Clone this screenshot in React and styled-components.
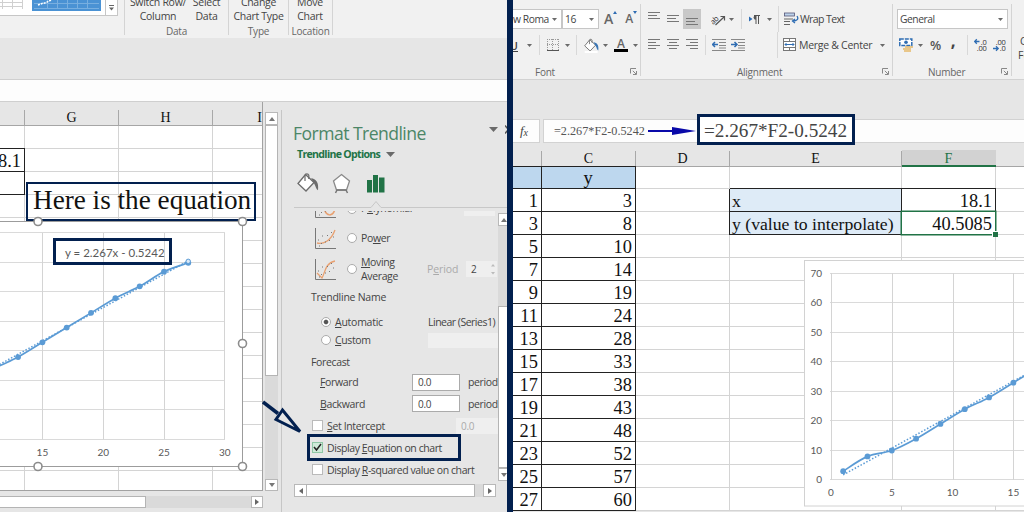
import React from "react";
import styled, { createGlobalStyle, css } from "styled-components";

const NAVY = "#02204f";
const GREEN = "#217346";
const BLUE = "#5b9bd5";

const points = [
  [1, 3],
  [3, 8],
  [5, 10],
  [7, 14],
  [9, 19],
  [11, 24],
  [13, 28],
  [15, 33],
  [17, 38],
  [19, 43],
  [21, 48],
  [23, 52],
  [25, 57],
  [27, 60],
];

const trend = (x) => 2.267 * x - 0.5242;

/* Catmull-Rom smoothing, like the smoothed scatter lines */
function smoothPath(pts) {
  let d = `M${pts[0][0]} ${pts[0][1]}`;
  for (let i = 0; i < pts.length - 1; i++) {
    const p0 = pts[i - 1] || pts[i];
    const p1 = pts[i];
    const p2 = pts[i + 1];
    const p3 = pts[i + 2] || p2;
    d += ` C${p1[0] + (p2[0] - p0[0]) / 6} ${p1[1] + (p2[1] - p0[1]) / 6} ${
      p2[0] - (p3[0] - p1[0]) / 6
    } ${p2[1] - (p3[1] - p1[1]) / 6} ${p2[0]} ${p2[1]}`;
  }
  return d;
}

function Series({ sx, sy }) {
  const pts = points.map(([x, y]) => [sx(x), sy(y)]);
  return (
    <g>
      <path
        d={`M${sx(1)} ${sy(trend(1))} L${sx(27)} ${sy(trend(27))}`}
        stroke={BLUE}
        strokeWidth="1.5"
        strokeDasharray="1.5 1.8"
        fill="none"
      />
      <path d={smoothPath(pts)} stroke={BLUE} strokeWidth="1.7" fill="none" />
      {pts.map(([x, y]) => (
        <circle key={x} cx={x} cy={y} r="2.9" fill={BLUE} />
      ))}
    </g>
  );
}

function LeftChart() {
  const sx = (x) => 42.4 + (x - 15) * 12.16;
  const sy = (y) => 218.5 - y * 2.945;
  return (
    <LeftChartSvg width="250" height="254" viewBox="0 0 250 254">
      <rect x="-20" y="0.5" width="262.5" height="245" fill="#fff" stroke="#9c9c9c" />
      {[0, 10, 20, 30, 40, 50, 60, 70].map((v) => (
        <path key={v} d={`M0 ${Math.round(sy(v)) - 0.5} H225`} stroke="#dadada" />
      ))}
      {[15, 20, 25, 30].map((v) => (
        <g key={v}>
          <path d={`M${Math.floor(sx(v)) + 0.5} 12 V218.5`} stroke="#d4d4d4" />
          <ChartText x={sx(v)} y="235" textAnchor="middle">
            {v}
          </ChartText>
        </g>
      ))}
      <Series sx={sx} sy={sy} />
      <circle cx="188.2" cy="40.3" r="2.2" fill="#dbe9f6" stroke={BLUE} />
      {[
        [38, 0.5],
        [242.5, 0.5],
        [242.5, 122.5],
        [38, 245.5],
        [242.5, 245.5],
      ].map(([x, y]) => (
        <circle key={`${x}-${y}`} cx={x} cy={y} r="4" fill="#fff" stroke="#8c8c8c" strokeWidth="1.6" />
      ))}
    </LeftChartSvg>
  );
}

function RightChart() {
  const sx = (x) => 27 + x * 12.16;
  const sy = (y) => 220 - y * 2.95;
  return (
    <RightChartSvg width="220" height="247" viewBox="0 0 220 247">
      <rect x="0.5" y="0.5" width="240" height="245.5" fill="#fff" stroke="#d2d2d2" />
      {[0, 10, 20, 30, 40, 50, 60, 70].map((v) => (
        <g key={v}>
          <path d={`M26 ${Math.round(sy(v)) - 0.5} H220`} stroke="#dadada" />
          <ChartText x="18" y={sy(v) + 3} textAnchor="end">
            {v}
          </ChartText>
        </g>
      ))}
      {[0, 5, 10, 15].map((v) => (
        <g key={v}>
          <path d={`M${Math.round(sx(v)) + 0.5} 13 V220`} stroke="#d4d4d4" />
          <ChartText x={sx(v)} y="236" textAnchor="middle">
            {v}
          </ChartText>
        </g>
      ))}
      <Series sx={sx} sy={sy} />
    </RightChartSvg>
  );
}

function Caret({ $ml, w = 5, h = 3 }) {
  return (
    <Icon $ml={$ml} width={w} height={h} viewBox="0 0 6 4" preserveAspectRatio="none">
      <path d="M0 0h6L3 4z" fill="#6a6a6a" />
    </Icon>
  );
}

function Lines({ widths, align = "start", $ml, gap = 3 }) {
  const h = widths.length * gap;
  return (
    <Icon $ml={$ml} width="12" height={h} viewBox={`0 0 12 ${h}`}>
      {widths.map((w, i) => {
        const x = align === "start" ? 0 : align === "end" ? 12 - w : (12 - w) / 2;
        return <path key={i} d={`M${x} ${i * gap + 0.5} h${w}`} stroke="#777" />;
      })}
    </Icon>
  );
}

function Launcher() {
  return (
    <LauncherIcon width="8" height="8" viewBox="0 0 8 8" fill="none" stroke="#888">
      <path d="M0.5 5.5V0.5H6M2.8 2.8L6 6M6.5 3v3.5H3" />
    </LauncherIcon>
  );
}

function Bucket({ $ml, size = 16, bar }) {
  return (
    <Icon $ml={$ml} width={size} height={size} viewBox="0 0 22 22">
      <path d="M8.5 2.5L17 10.5 9 19 1 11.5z" fill="#fff" stroke="#6c6c6c" strokeWidth="1.3" />
      <path d="M8 9V3.2a2 2 0 0 1 3.8 0V7" fill="none" stroke="#6c6c6c" strokeWidth="1.2" />
      <path d="M14 6.3c5 .6 8 4 7 12-2-1-2.200-4-4-7z" fill={bar ? "#3b76b5" : "#6c6c6c"} />
      {bar && <path d="M1 20.500h19" stroke="#fff" strokeWidth="3" />}
    </Icon>
  );
}

function Indent({ $ml, flip }) {
  return (
    <Icon $ml={$ml} width="14" height="12" viewBox="0 0 14 12">
      <path d="M0 .5h14M7 3.500h7M7 6.500h7M7 9h7M0 11.500h14" stroke="#888" />
      <path
        d={flip ? "M0 5.500h6M3.500 3l2.500 2.500-2.500 2.500" : "M6 5.500H0.500M3 3L0.500 5.500 3 8"}
        stroke="#2f6db3"
        strokeWidth="1.5"
        fill="none"
      />
    </Icon>
  );
}

function Decimals({ $ml, top, bottom, increase }) {
  return (
    <Icon $ml={$ml} width="13" height="14" viewBox="0 0 13 14">
      <DigitText x="12.5" y="6.5" textAnchor="end">
        {top}
      </DigitText>
      <DigitText x="12.5" y="13" textAnchor="end">
        {bottom}
      </DigitText>
      <path
        d={increase ? "M5.500 3.500H.8M2.800 1.300L.6 3.500l2.200 2.200" : "M0 10.500h5M3 8.300l2.200 2.200L3 12.700"}
        stroke="#2f6db3"
        strokeWidth="1.300"
        fill="none"
      />
    </Icon>
  );
}

function TrendIcon({ kind }) {
  return (
    <svg width="23" height="21" viewBox="0 0 23 21" fill="none">
      <path d="M1.500 0V20.500H22" stroke="#777" />
      {kind === "power" && <path d="M3 15C9 16.500 17 13 21 2" stroke="#e8a070" strokeWidth="1.300" />}
      {kind === "moving" && <path d="M3 14l5 5C11 14 11 4 21 2" stroke="#e8a070" strokeWidth="1.300" />}
      {kind === "poly" && <path d="M10 11c2 9 9 9 11 1" stroke="#e8a070" strokeWidth="1.500" />}
      <path
        d="M4 12h1M7 15.500h1M8 8h1M11 14h1M13 7.500h1M15 12.500h1M17 4.500h1M19 9h1M5 18h1"
        stroke="#777"
      />
    </svg>
  );
}

function LeftPane() {
  return (
    <Left>
      <LeftRibbon>
        <Gallery>
          <svg width="118" height="16" viewBox="0 0 118 16">
            <rect x="-1" y="-1" width="118.500" height="16.500" fill="#fff" stroke="#c6c6c6" />
            <path d="M0 2.500h23M0 6.500h23M2.500 0v9M12.500 0v9M22.500 0v9" stroke="#d0d0d0" />
            <rect x="32" y="-1" width="69" height="12" fill="#4a92d4" />
            <path d="M34 3.500h65M34 8.500h65M47.500 0v9M57.500 0v9M67.500 0v9M77.500 0v9M87.500 0v9" stroke="#78afe0" />
            <path d="M38 5l4-1.500 4-.8 5-2.700" stroke="#fff" fill="none" strokeDasharray="2 1" strokeWidth="1.500" />
            <path d="M105.500 0v15" stroke="#c6c6c6" />
            <path d="M109 5.500h5" stroke="#666" />
            <path d="M109 7.500h5l-2.500 3z" fill="#666" />
          </svg>
        </Gallery>
        <RibbonGroup $w={104}>
          <BigButtons>
            <BigButton $w={66}>
              <span>Switch Row/</span>
              <span>Column</span>
            </BigButton>
            <BigButton $w={31}>
              <span>Select</span>
              <span>Data</span>
            </BigButton>
          </BigButtons>
          <GroupName>Data</GroupName>
        </RibbonGroup>
        <RibbonGroup $w={60}>
          <BigButtons>
            <BigButton $w={59}>
              <span>Change</span>
              <span>Chart Type</span>
            </BigButton>
          </BigButtons>
          <GroupName>Type</GroupName>
        </RibbonGroup>
        <RibbonGroup $w={44}>
          <BigButtons>
            <BigButton $w={42}>
              <span>Move</span>
              <span>Chart</span>
            </BigButton>
          </BigButtons>
          <GroupName>Location</GroupName>
        </RibbonGroup>
      </LeftRibbon>
      <FormulaStrip />
      <LeftBody>
        <SheetColumn>
          <LeftGrid>
            <HeadCell />
            <HeadCell>G</HeadCell>
            <HeadCell>H</HeadCell>
            <HeadCell $last>I</HeadCell>
            {Array.from({ length: 16 }, (_, r) => (
              <React.Fragment key={r}>
                <Cell $boxed={r === 1 || r === 2}>{r === 1 ? "8.1" : ""}</Cell>
                <Cell />
                <Cell />
                <Cell $last />
              </React.Fragment>
            ))}
          </LeftGrid>
          <HScroll>
            <HThumb />
            <ScrollButton $w={12} $h={12}>
              <svg width="4" height="6" viewBox="0 0 4 6">
                <path d="M0 0l4 3-4 3z" fill="#666" />
              </svg>
            </ScrollButton>
          </HScroll>
        </SheetColumn>
        <VScroll>
          <ScrollButton $w={13} $h={13}>
            <svg width="6" height="4" viewBox="0 0 6 4">
              <path d="M0 4l3-4 3 4z" fill="#777" />
            </svg>
          </ScrollButton>
          <VThumb />
          <VTrack />
          <ScrollButton $w={13} $h={12}>
            <svg width="6" height="4" viewBox="0 0 6 4">
              <path d="M0 0l3 4 3-4z" fill="#777" />
            </svg>
          </ScrollButton>
        </VScroll>
        <TrendlinePane />
      </LeftBody>
      <Note>Here is the equation</Note>
      <LeftChart />
      <EquationBox>y = 2.267x - 0.5242</EquationBox>
      <CheckHighlight />
      <Pointer width="46" height="40" viewBox="0 0 46 40" fill="none" stroke={NAVY} strokeWidth="3">
        <path d="M1 2L16 13.500" strokeWidth="3.500" />
        <path d="M20.500 10L14 19.500 38 31.500z" fill="#e6e6e6" />
      </Pointer>
    </Left>
  );
}

function TrendlinePane() {
  return (
    <Pane>
      <PaneHeader>
        <PaneTitle>Format Trendline</PaneTitle>
        <Caret w={9} h={5} />
        <Icon $ml={7} width="8" height="9" viewBox="0 0 8 8">
          <path d="M0 0l7 8M7 0L0 8" stroke="#555" strokeWidth="1.500" />
        </Icon>
      </PaneHeader>
      <OptionsRow>
        Trendline Options
        <Caret $ml={6} w={9} h={5} />
      </OptionsRow>
      <PaneTabs>
        <Bucket size={22} />
        <Icon $ml={12} width="21" height="21" viewBox="0 0 20 21">
          <path d="M10 1.500L18 8l-3 9H5L2 8z" fill="#fff" stroke="#8a8a8a" strokeWidth="1.300" />
          <path d="M4 20l1.500-3h9l1.500 3" fill="none" stroke="#777" strokeWidth="1.500" />
        </Icon>
        <Icon $ml={15} width="18" height="19" viewBox="0 0 18 19">
          <path d="M0 6h5v12.500H0zM6 1h5v17.500H6zM12 3.500h5.500v15H12z" fill={GREEN} />
        </Icon>
      </PaneTabs>
      <svg width="226" height="10" viewBox="0 0 226 10">
        <path d="M12 8.500H89L94 2.500l5 6H226" fill="none" stroke="#c8c8c8" />
      </svg>
      <PaneBody>
        <Options>
          <ClippedRow>
            <TrendIcon kind="poly" />
            <Radio $ml={10} $drop={4} />
            <ClippedLabel>
              P<u>o</u>lynomial
            </ClippedLabel>
            <Field $w={31} $h={16} $ml={48} $flat $drop={2} />
          </ClippedRow>
          <OptionRow $h={38} $pl={32}>
            <TrendIcon kind="power" />
            <Radio $ml={10} />
            <Label $w={75}>
              Po<u>w</u>er
            </Label>
          </OptionRow>
          <OptionRow $h={24} $pl={32}>
            <TrendIcon kind="moving" />
            <Radio $ml={10} />
            <Label $w={66}>
              <u>M</u>oving
              <br />
              Average
            </Label>
            <Label $w={39} $faded $ls={-0.1}>
              P<u>e</u>riod
            </Label>
            <Field $w={31} $h={16} $flat>
              2
              <svg width="6" height="12" viewBox="0 0 6 12">
                <path d="M1 3.500L3 1l2 2.500zM1 9l2 2.500L5 9z" fill="#bbb" />
              </svg>
            </Field>
          </OptionRow>
          <OptionRow $h={32} $pl={29}>
            <Label $ls={-0.25}>Trendline Name</Label>
          </OptionRow>
          <OptionRow $h={17} $pl={39}>
            <Radio $on />
            <Label $w={93} $ls={-0.25}>
              <u>A</u>utomatic
            </Label>
            <Label $ls={-0.5}>Linear (Series1)</Label>
          </OptionRow>
          <OptionRow $h={20} $pl={39}>
            <Radio />
            <Label $w={93}>
              <u>C</u>ustom
            </Label>
            <Field $w={71} $h={15} $flat />
          </OptionRow>
          <OptionRow $h={24} $pl={29}>
            <Label>Forecast</Label>
          </OptionRow>
          <OptionRow $h={16} $pl={38}>
            <Label $w={92}>
              <u>F</u>orward
            </Label>
            <Field $w={48} $h={17}>0.0</Field>
            <Label $ml={8}>period</Label>
          </OptionRow>
          <OptionRow $h={27} $pl={38}>
            <Label $w={92}>
              <u>B</u>ackward
            </Label>
            <Field $w={48} $h={17}>0.0</Field>
            <Label $ml={8}>period</Label>
          </OptionRow>
          <OptionRow $h={17} $pl={30}>
            <Checkbox />
            <Label $w={129}>
              <u>S</u>et Intercept
            </Label>
            <Field $w={42} $h={16} $flat>
              <Faded>0.0</Faded>
            </Field>
          </OptionRow>
          <OptionRow $h={27} $pl={30}>
            <Checkbox $on>
              <svg width="9" height="9" viewBox="0 0 9 9">
                <path d="M1 4l2.500 3L8 1" stroke="#222" strokeWidth="1.500" fill="none" />
              </svg>
            </Checkbox>
            <Label $ls={-0.42}>
              Display <u>E</u>quation on chart
            </Label>
          </OptionRow>
          <OptionRow $h={17} $pl={30}>
            <Checkbox />
            <Label $ls={-0.42}>
              Display <u>R</u>-squared value on chart
            </Label>
          </OptionRow>
        </Options>
        <PaneScroll>
          <ScrollButton $w={12} $h={13}>
            <svg width="6" height="4" viewBox="0 0 6 4">
              <path d="M0 4l3-4 3 4z" fill="#777" />
            </svg>
          </ScrollButton>
          <PaneTrack />
          <PaneThumb />
          <ScrollButton $w={12} $h={13}>
            <svg width="6" height="4" viewBox="0 0 6 4">
              <path d="M0 0l3 4 3-4z" fill="#777" />
            </svg>
          </ScrollButton>
        </PaneScroll>
      </PaneBody>
      <PaneHScroll>
        <ScrollButton $w={13} $h={13}>
          <svg width="4" height="6" viewBox="0 0 4 6">
            <path d="M4 0L0 3l4 3z" fill="#666" />
          </svg>
        </ScrollButton>
        <PaneHThumb />
        <ScrollButton $w={13} $h={13}>
          <svg width="4" height="6" viewBox="0 0 4 6">
            <path d="M0 0l4 3-4 3z" fill="#666" />
          </svg>
        </ScrollButton>
      </PaneHScroll>
    </Pane>
  );
}

function RightRibbon() {
  return (
    <Ribbon>
      <ToolGroup $w={128}>
        <ToolRow>
          <ComboBox $w={49}>
            w Roma
            <Caret />
          </ComboBox>
          <ComboBox $w={37} $left>
            16
            <Caret />
          </ComboBox>
          <GrowLetter $ml={5} $size={14}>
            A
            <svg width="4" height="3" viewBox="0 0 4 3">
              <path d="M2 0l2 3H0z" fill="#2f6db3" />
            </svg>
          </GrowLetter>
          <GrowLetter $ml={8} $size={12}>
            A
            <svg width="4" height="3" viewBox="0 0 4 3">
              <path d="M0 0h4L2 3z" fill="#2f6db3" />
            </svg>
          </GrowLetter>
        </ToolRow>
        <ToolRow>
          <Underline>U</Underline>
          <Caret $ml={9} />
          <ToolDivider $ml={7} />
          <Icon $ml={7} width="12" height="12" viewBox="0 0 12 12">
            <path d="M.5 0v11M5.500 0v11M11.500 0v11M0 .5h12M0 5.500h12" stroke="#999" strokeDasharray="1 1" />
            <path d="M0 11.500h12" stroke="#555" />
          </Icon>
          <Caret $ml={6} />
          <ToolDivider $ml={6} />
          <Bucket $ml={7} size={15} bar />
          <Caret $ml={4} />
          <FontColor $ml={6}>A</FontColor>
          <Caret $ml={5} />
        </ToolRow>
        <ToolName $pl={22}>Font</ToolName>
        <Launcher />
      </ToolGroup>
      <ToolGroup $w={252}>
        <ToolRow>
          <Raised $up={3}>
            <Lines $ml={7} widths={[12, 9, 12]} />
          </Raised>
          <Lines $ml={7} widths={[12, 9, 12]} />
          <Selected>
            <Lines widths={[12, 9, 12]} />
          </Selected>
          <Icon $ml={10} width="15" height="14" viewBox="0 0 15 14">
            <DigitText x="-2" y="9" transform="rotate(-45 5 6)">
              ab
            </DigitText>
            <path d="M4.500 13L13 5M9.500 4.500h4V8.500" stroke="#555" fill="none" strokeWidth="1.200" />
          </Icon>
          <Caret $ml={3} />
          <ToolDivider $ml={7} />
          <Icon $ml={7} width="11" height="9" viewBox="0 0 11 9">
            <path d="M0 1.500v5L3.500 4z" fill="#2f6db3" />
            <path d="M7 9V.5M9.500 9V.5M5 .5h6" stroke="#555" />
            <path d="M7 0a2.300 2.300 0 0 0 0 4.800z" fill="#555" />
          </Icon>
          <Caret $ml={7} />
          <ToolDivider $ml={6} $tall />
          <Icon $ml={5} width="15" height="14" viewBox="0 0 15 14">
            <rect x=".5" y="1" width="10" height="3" fill="#bcd3ec" stroke="#557" strokeWidth=".8" />
            <path d="M0 7h9M0 9.500h6M0 12.500h6" stroke="#666" />
            <path d="M13 4c2 3 0 5-4 5M11 7L8.500 9 11 11" stroke="#2f6db3" strokeWidth="1.300" fill="none" />
          </Icon>
          <ToolText $ls={-0.6}>Wrap Text</ToolText>
        </ToolRow>
        <ToolRow>
          <Lines $ml={7} widths={[12, 8, 12, 8]} />
          <Lines $ml={7} align="mid" widths={[12, 8, 12, 8]} />
          <Lines $ml={7} align="end" widths={[12, 8, 12, 8]} />
          <ToolDivider $ml={7} />
          <Indent $ml={6} />
          <Indent $ml={5} flip />
          <ToolDivider $ml={32} $tall />
          <Icon $ml={5} width="13" height="14" viewBox="0 0 13 14">
            <rect x=".5" y=".5" width="12" height="12" fill="#fff" stroke="#777" />
            <path d="M.5 3.500h12M.5 9.500h12M6.500 .5v3M6.500 9.500v3" stroke="#777" />
            <path d="M2 6.500h9M3.500 5L2 6.500 3.500 8M9.500 5L11 6.500 9.500 8" stroke="#2f6db3" fill="none" />
          </Icon>
          <ToolText $ml={3} $ls={-0.28}>
            Merge &amp; Center
          </ToolText>
          <Caret $ml={8} />
        </ToolRow>
        <ToolName $pl={96}>Alignment</ToolName>
        <Launcher />
      </ToolGroup>
      <ToolGroup $w={119}>
        <ToolRow>
          <ComboBox $w={111} $ml={4} $left>
            General
            <Caret />
          </ComboBox>
        </ToolRow>
        <ToolRow>
          <Icon $ml={6} width="14" height="14" viewBox="0 0 14 14">
            <rect x=".8" y="1" width="12" height="6.500" fill="#fff" stroke="#2f6db3" strokeWidth="1.500" strokeDasharray="4 1" />
            <circle cx="7" cy="4.300" r="1.800" fill="#2f6db3" />
            <path d="M6 9h8M4 11h8M5 13h7" stroke="#e6b968" strokeWidth="1.700" />
          </Icon>
          <Caret $ml={5} />
          <Percent>%</Percent>
          <Comma>,</Comma>
          <ToolDivider $ml={11} />
          <Decimals $ml={6} top=".0" bottom=".00" increase />
          <Decimals $ml={6} top=".00" bottom=".0" />
        </ToolRow>
        <ToolName $pl={35}>Number</ToolName>
        <Launcher />
      </ToolGroup>
      <CutOff>
        <span>C</span>
        <span>Fo</span>
      </CutOff>
    </Ribbon>
  );
}

function RightPane() {
  return (
    <Right>
      <RightRibbon />
      <FormulaRow>
        <FxBox>
          f<small>x</small>
        </FxBox>
        <FormulaInput>
          =2.267*F2-0.5242
          <svg width="49" height="10" viewBox="0 0 49 10">
            <path d="M0 4h26v2H0zM24 1l24 4-24 4z" fill="#0808a8" />
          </svg>
        </FormulaInput>
      </FormulaRow>
      <RightGrid>
        <HeadCell />
        <HeadCell>C</HeadCell>
        <HeadCell>D</HeadCell>
        <HeadCell>E</HeadCell>
        <HeadCell $active>F</HeadCell>
        <HeadCell $last />
        <Cell $boxed $fill="#bdd7ee" />
        <Cell $boxed $fill="#bdd7ee" $center>
          y
        </Cell>
        <Cell />
        <Cell />
        <Cell />
        <Cell $last />
        {points.map(([x, y], r) => (
          <React.Fragment key={x}>
            <Cell $boxed>{x}</Cell>
            <Cell $boxed>{y}</Cell>
            <Cell />
            {r < 2 ? (
              <Cell $boxed $fill="#deebf7" $text>
                {r === 0 ? "x" : "y (value to interpolate)"}
              </Cell>
            ) : (
              <Cell />
            )}
            <Cell $boxed={r < 2} $selected={r === 1}>
              {r === 0 ? "18.1" : r === 1 ? "40.5085" : ""}
            </Cell>
            <Cell $last />
          </React.Fragment>
        ))}
      </RightGrid>
      <RightChart />
      <FormulaZoom>=2.267*F2-0.5242</FormulaZoom>
    </Right>
  );
}

function App() {
  return (
    <Page>
      <GlobalStyle />
      <LeftPane />
      <Divider />
      <RightPane />
    </Page>
  );
}

const GlobalStyle = createGlobalStyle`
  * {
    box-sizing: border-box;
  }
  body {
    margin: 0;
    overflow: hidden;
    font-family: "Open Sans", "Noto Sans", sans-serif;
    font-size: 10.5px;
    color: #444;
  }
  svg {
    display: block;
    flex-shrink: 0;
  }
`;

const Page = styled.div`
  display: flex;
  width: 1024px;
  height: 512px;
  overflow: hidden;
  background: #e6e6e6;
`;

const Divider = styled.div`
  width: 6px;
  background: ${NAVY};
  flex-shrink: 0;
`;

const Left = styled.section`
  position: relative;
  display: flex;
  flex-direction: column;
  width: 507px;
  overflow: hidden;
  flex-shrink: 0;
`;

const Right = styled.section`
  position: relative;
  display: flex;
  flex-direction: column;
  width: 511px;
  overflow: hidden;
`;

/* shared bits */

const Icon = styled.svg`
  margin-left: ${({ $ml }) => $ml || 0}px;
`;

const ChartText = styled.text`
  font-family: Lato, sans-serif;
  font-size: 10px;
  fill: #595959;
`;

const DigitText = styled.text`
  font-size: 7.5px;
  letter-spacing: -0.3px;
  fill: #333;
`;

const serif = css`
  font-family: "Liberation Serif", "Times New Roman", serif;
  color: #111;
`;

const ScrollButton = styled.div`
  display: flex;
  align-items: center;
  justify-content: center;
  width: ${({ $w }) => $w}px;
  height: ${({ $h }) => $h}px;
  background: #fff;
  border: 1px solid #b8b8b8;
  flex-shrink: 0;
`;

/* left ribbon */

const LeftRibbon = styled.div`
  display: flex;
  height: 38px;
  background: #f1f1f1;
`;

const Gallery = styled.div`
  width: 125px;
  height: 35px;
  border-right: 1px solid #d4d4d4;
`;

const RibbonGroup = styled.div`
  display: flex;
  flex-direction: column;
  align-items: center;
  width: ${({ $w }) => $w}px;
  height: 35px;
  border-right: 1px solid #d4d4d4;
`;

const BigButtons = styled.div`
  display: flex;
  width: 100%;
  height: 25px;
  margin-top: -4px;
`;

const BigButton = styled.div`
  display: flex;
  flex-direction: column;
  align-items: center;
  width: ${({ $w }) => $w}px;
  line-height: 13.5px;
  letter-spacing: -0.28px;
  white-space: nowrap;
`;

const GroupName = styled.div`
  margin-top: 3px;
  line-height: 14px;
  font-size: 10px;
  letter-spacing: -0.2px;
  color: #666;
`;

const FormulaStrip = styled.div`
  height: 23px;
  margin-top: 41px;
  background: #fdfdfd;
  border-top: 1px solid #cfcfcf;
  border-bottom: 1px solid #cfcfcf;
  flex-shrink: 0;
`;

/* sheets */

const LeftBody = styled.div`
  display: flex;
  height: 410px;
`;

const SheetColumn = styled.div`
  display: flex;
  flex-direction: column;
  width: 263px;
`;

const LeftGrid = styled.div`
  display: grid;
  grid-template-columns: 25px 94px 94px 50px;
  grid-template-rows: 24px;
  grid-auto-rows: 23px;
  height: 389px;
  overflow: hidden;
  border-right: 1px solid #a2a2a2;
  border-bottom: 1px solid #a2a2a2;
`;

const RightGrid = styled.div`
  display: grid;
  grid-template-columns: 29px 94px 94px 172px 94px 60px;
  grid-template-rows: 24px 22px;
  grid-auto-rows: 23px;
  height: 370px;
  overflow: hidden;
`;

const HeadCell = styled.div`
  ${serif}
  display: flex;
  align-items: flex-end;
  justify-content: ${({ $last }) => ($last ? "flex-end" : "center")};
  padding: 0 1px 0 0;
  font-size: 14px;
  line-height: 14px;
  background: linear-gradient(#a8a8a8, #a8a8a8) no-repeat right bottom / 1px 15px #e6e6e6;
  border-bottom: 1px solid #a6a6a6;
  ${({ $last }) =>
    $last &&
    css`
      background: #e6e6e6;
    `}
  ${({ $active }) =>
    $active &&
    css`
      color: ${GREEN};
      background: linear-gradient(#d2d2d2, #d2d2d2) no-repeat right bottom / 94px 15px #e6e6e6;
      border-bottom: 2px solid ${GREEN};
      line-height: 12px;
    `}
`;

const Cell = styled.div`
  ${serif}
  display: flex;
  align-items: center;
  justify-content: ${({ $center, $text }) => ($center ? "center" : $text ? "flex-start" : "flex-end")};
  padding: ${({ $center }) => ($center ? 0 : 2)}px 3px 0 2px;
  font-size: 18.4px;
  line-height: 20px;
  white-space: nowrap;
  background: ${({ $fill }) => $fill || "#fff"};
  border-right: ${({ $last }) => ($last ? 0 : 1)}px solid #d4d4d4;
  border-bottom: 1px solid #d4d4d4;
  ${({ $boxed }) =>
    $boxed &&
    css`
      border-color: #222;
      box-shadow: 0 -1px 0 #222, -1px 0 0 #222;
    `}
  ${({ $text }) =>
    $text &&
    css`
      font-size: 17.7px;
    `}
  ${({ $selected }) =>
    $selected &&
    css`
      position: relative;
      z-index: 1;
      margin: -1px 0 0 -1px;
      border: 1px solid ${GREEN};
      box-shadow: 0 0 0 0.5px ${GREEN};
      &::after {
        content: "";
        position: absolute;
        right: -3px;
        bottom: -3px;
        width: 5px;
        height: 5px;
        background: ${GREEN};
        border-top: 1px solid #fff;
        border-left: 1px solid #fff;
      }
    `}
`;

const HScroll = styled.div`
  display: flex;
  justify-content: space-between;
  height: 12px;
  margin-top: 5px;
  background: #dadada;
`;

const HThumb = styled.div`
  width: 146px;
  background: #fff;
  border: 1px solid #b4b4b4;
  border-left: 0;
`;

const VScroll = styled.div`
  display: flex;
  flex-direction: column;
  width: 13px;
  height: 379px;
  margin: 10px 3px 0 2px;
  flex-shrink: 0;
`;

const VThumb = styled.div`
  height: 251px;
  background: #fff;
  border: 1px solid #b4b4b4;
`;

const VTrack = styled.div`
  flex: 1;
  background: #dadada;
`;

/* trendline pane */

const Pane = styled.div`
  width: 226px;
  height: 402px;
  margin-top: 8px;
  border-left: 1px solid #c6c6c6;
  flex-shrink: 0;
`;

const PaneHeader = styled.div`
  display: flex;
  align-items: center;
  height: 30px;
  padding: 9px 0 0 11px;
`;

const PaneTitle = styled.div`
  width: 196px;
  margin-top: 6px;
  font-size: 17.6px;
  line-height: 24px;
  letter-spacing: -0.55px;
  white-space: nowrap;
  color: #4c8667;
  flex-shrink: 0;
`;

const OptionsRow = styled.div`
  display: flex;
  align-items: center;
  height: 28px;
  padding: 0 0 0 15px;
  font-weight: 700;
  font-size: 10.6px;
  letter-spacing: -0.7px;
  color: ${GREEN};
`;

const PaneTabs = styled.div`
  display: flex;
  align-items: center;
  height: 30px;
  margin-bottom: 1px;
  padding-left: 15px;
`;

const PaneBody = styled.div`
  display: flex;
  height: 271px;
  margin-top: 2px;
`;

const Options = styled.div`
  width: 216px;
  overflow: hidden;
  flex-shrink: 0;
`;

const ClippedRow = styled.div`
  display: flex;
  align-items: flex-end;
  height: 8px;
  padding: 0 0 1px 32px;
  overflow: hidden;
`;

const ClippedLabel = styled.div`
  width: 55px;
  margin-bottom: 3px;
  line-height: 14px;
  letter-spacing: -0.3px;
`;

const OptionRow = styled.div`
  display: flex;
  align-items: center;
  height: ${({ $h }) => $h}px;
  padding-left: ${({ $pl }) => $pl}px;
`;

const Label = styled.div`
  width: ${({ $w }) => ($w ? `${$w}px` : "auto")};
  margin-left: ${({ $ml }) => $ml || 0}px;
  line-height: 14px;
  letter-spacing: ${({ $ls }) => $ls || -0.36}px;
  white-space: nowrap;
  color: ${({ $faded }) => ($faded ? "#aaa" : "#444")};
  flex-shrink: 0;
  u {
    text-underline-offset: 1px;
  }
`;

const Faded = styled.span`
  color: #aaa;
`;

const Radio = styled.div`
  width: 10px;
  height: 10px;
  margin-left: ${({ $ml }) => $ml || 0}px;
  margin-right: 4px;
  margin-bottom: ${({ $drop }) => $drop || 0}px;
  border: 1px solid #ababab;
  border-radius: 50%;
  background: ${({ $on }) => ($on ? "radial-gradient(#555 0 1.8px, #fff 2.8px)" : "#fff")};
  flex-shrink: 0;
`;

const Checkbox = styled.div`
  display: flex;
  align-items: center;
  justify-content: center;
  width: 11px;
  height: 11px;
  margin-right: 4px;
  border: 1px solid ${({ $on }) => ($on ? "#8fc7a6" : "#bababa")};
  background: ${({ $on }) => ($on ? "#cfead9" : "#fff")};
  flex-shrink: 0;
`;

const Field = styled.div`
  display: flex;
  align-items: center;
  justify-content: space-between;
  width: ${({ $w }) => $w}px;
  height: ${({ $h }) => $h}px;
  margin-left: ${({ $ml }) => $ml || 0}px;
  margin-bottom: ${({ $drop }) => $drop || 0}px;
  padding: 0 1px 0 5px;
  font-size: 10px;
  letter-spacing: -0.3px;
  background: ${({ $flat }) => ($flat ? "#efefef" : "#fff")};
  border: ${({ $flat }) => ($flat ? "0" : "1px solid #ababab")};
  flex-shrink: 0;
`;

const PaneScroll = styled.div`
  width: 12px;
  padding-top: 2px;
  flex-shrink: 0;
`;

const PaneTrack = styled.div`
  height: 80px;
  background: #dadada;
`;

const PaneThumb = styled.div`
  height: 162px;
  background: #fff;
  border: 1px solid #b4b4b4;
`;

const PaneHScroll = styled.div`
  display: flex;
  width: 202px;
  height: 13px;
  margin: 2px 0 0 12px;
  justify-content: space-between;
  background: #dadada;
`;

const PaneHThumb = styled.div`
  width: 169px;
  margin-left: -1px;
  margin-right: auto;
  background: #fff;
  border: 1px solid #b4b4b4;
`;

/* annotations lying over the sheets */

const LeftChartSvg = styled.svg`
  position: absolute;
  left: 0;
  top: 221px;
  overflow: visible;
`;

const RightChartSvg = styled.svg`
  position: absolute;
  left: 291px;
  top: 260px;
`;

const Note = styled.div`
  ${serif}
  position: absolute;
  left: 26px;
  top: 182px;
  width: 230px;
  height: 39px;
  padding-left: 5px;
  font-size: 27.2px;
  line-height: 32px;
  white-space: nowrap;
  border: 2px solid ${NAVY};
`;

const EquationBox = styled.div`
  position: absolute;
  left: 53px;
  top: 238px;
  width: 119px;
  height: 27px;
  padding-left: 9px;
  font-family: Lato, sans-serif;
  font-size: 11.5px;
  line-height: 23px;
  white-space: nowrap;
  color: #595959;
  border: 3px solid ${NAVY};
`;

const CheckHighlight = styled.div`
  position: absolute;
  left: 307px;
  top: 434px;
  width: 154px;
  height: 27px;
  border: 3px solid ${NAVY};
`;

const Pointer = styled.svg`
  position: absolute;
  left: 262px;
  top: 400px;
`;

const FormulaZoom = styled.div`
  ${serif}
  position: absolute;
  left: 184px;
  top: 114px;
  width: 158px;
  height: 31px;
  padding-left: 4px;
  font-size: 19.2px;
  line-height: 27px;
  color: #444;
  background: #fff;
  border: 3px solid ${NAVY};
`;

/* right ribbon */

const Ribbon = styled.div`
  display: flex;
  height: 80px;
  background: #f1f1f1;
  border-bottom: 1px solid #d2d2d2;
  flex-shrink: 0;
`;

const ToolGroup = styled.div`
  position: relative;
  width: ${({ $w }) => $w}px;
  height: 72px;
  margin-top: 4px;
  padding-top: 2px;
  border-right: 1px solid #d4d4d4;
  flex-shrink: 0;
`;

const ToolRow = styled.div`
  display: flex;
  align-items: center;
  height: 26px;
`;

const ToolName = styled.div`
  padding-left: ${({ $pl }) => $pl}px;
  margin-top: 7px;
  font-size: 10px;
  line-height: 14px;
  letter-spacing: -0.25px;
  color: #666;
`;

const LauncherIcon = styled.svg`
  position: absolute;
  right: 2px;
  bottom: 0;
`;

const ToolDivider = styled.div`
  width: 1px;
  height: ${({ $tall }) => ($tall ? 26 : 20)}px;
  margin-left: ${({ $ml }) => $ml}px;
  background: #d8d8d8;
`;

const ComboBox = styled.div`
  display: flex;
  align-items: center;
  justify-content: space-between;
  width: ${({ $w }) => $w}px;
  height: 20px;
  margin-left: ${({ $ml }) => $ml || 0}px;
  padding: 0 4px 0 ${({ $left }) => ($left ? 2 : 0)}px;
  font-size: 10.3px;
  letter-spacing: -0.45px;
  white-space: nowrap;
  background: #fff;
  border: 1px solid #c6c6c6;
  border-left-width: ${({ $left }) => ($left ? 1 : 0)}px;
`;

const GrowLetter = styled.div`
  display: flex;
  margin-left: ${({ $ml }) => $ml}px;
  font-size: ${({ $size }) => $size}px;
  font-weight: 600;
  line-height: 16px;
  color: #666;
`;

const Underline = styled.div`
  width: 5px;
  direction: rtl;
  overflow: hidden;
  font-size: 11px;
  font-weight: 600;
  text-decoration: underline;
`;

const FontColor = styled.div`
  width: 14px;
  height: 14px;
  margin-left: ${({ $ml }) => $ml}px;
  font-size: 12px;
  font-weight: 600;
  line-height: 11px;
  text-align: center;
  color: #666;
  border-bottom: 3px solid #000;
`;

const Raised = styled.div`
  margin-bottom: ${({ $up }) => $up * 2}px;
`;

const Selected = styled.div`
  display: flex;
  align-items: flex-end;
  justify-content: center;
  width: 18px;
  height: 20px;
  margin-left: 4px;
  padding-bottom: 2px;
  background: #c8c8c8;
`;

const ToolText = styled.div`
  margin-left: ${({ $ml }) => $ml || 1}px;
  letter-spacing: ${({ $ls }) => $ls || -0.5}px;
  white-space: nowrap;
`;

const Percent = styled.div`
  margin-left: 7px;
  font-size: 13px;
  font-weight: 600;
  line-height: 14px;
  letter-spacing: -0.6px;
  color: #555;
`;

const Comma = styled.div`
  margin-left: 10px;
  margin-top: -9px;
  font-size: 17px;
  font-weight: 700;
  line-height: 16px;
`;

const CutOff = styled.div`
  display: flex;
  flex-direction: column;
  align-items: flex-start;
  padding: 34px 0 0 6px;
  line-height: 14px;
  span:first-child {
    padding-left: 2px;
  }
`;

/* right formula bar */

const FormulaRow = styled.div`
  display: flex;
  height: 24px;
  margin-top: 39px;
  gap: 3px;
  flex-shrink: 0;
`;

const FxBox = styled.div`
  ${serif}
  display: flex;
  align-items: center;
  justify-content: center;
  width: 27px;
  padding-right: 4px;
  font-size: 13px;
  font-style: italic;
  color: #444;
  background: #fdfdfd;
  border: 1px solid #d2d2d2;
  border-left: 0;
  small {
    font-size: 10px;
    padding-top: 2px;
  }
`;

const FormulaInput = styled.div`
  ${serif}
  display: flex;
  align-items: center;
  gap: 3px;
  flex: 1;
  padding-left: 10px;
  font-size: 12.2px;
  color: #555;
  background: #fdfdfd;
  border: 1px solid #d2d2d2;
  border-right: 0;
`;

export default App;
